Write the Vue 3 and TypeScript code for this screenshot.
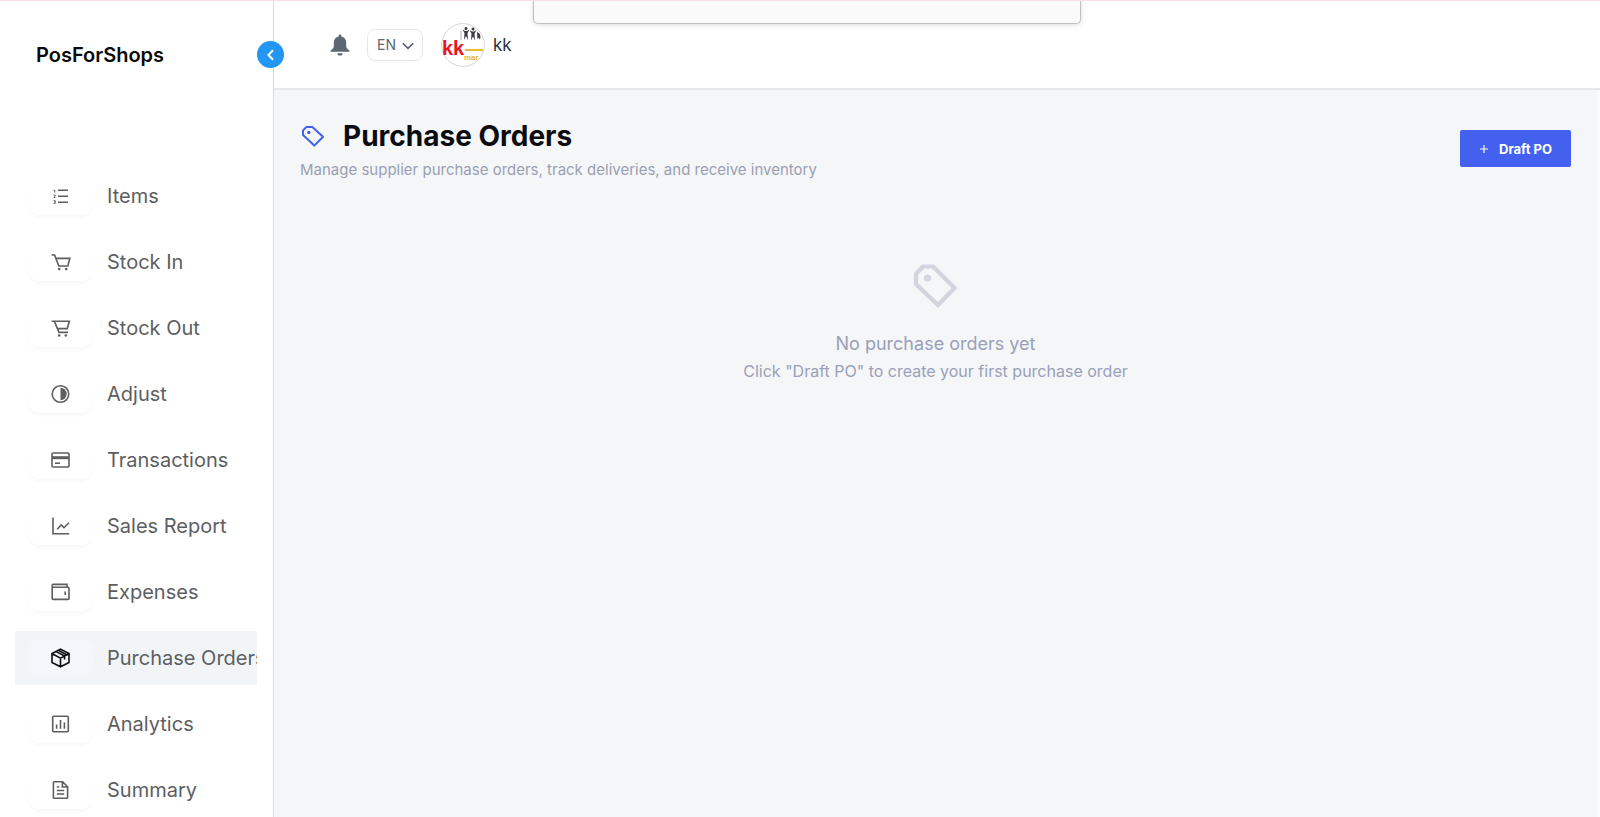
<script setup lang="ts">
import { ref } from 'vue'

interface NavItem {
  id: string
  label: string
}

const items: NavItem[] = [
  { id: 'items', label: 'Items' },
  { id: 'stock-in', label: 'Stock In' },
  { id: 'stock-out', label: 'Stock Out' },
  { id: 'adjust', label: 'Adjust' },
  { id: 'transactions', label: 'Transactions' },
  { id: 'sales', label: 'Sales Report' },
  { id: 'expenses', label: 'Expenses' },
  { id: 'orders', label: 'Purchase Orders' },
  { id: 'analytics', label: 'Analytics' },
  { id: 'summary', label: 'Summary' },
]

const active = ref('orders')
const language = ref('EN')
</script>

<template>
  <div class="app">
    <aside class="sidebar">
      <div class="brand">PosForShops</div>
      <button class="collapse" type="button" aria-label="Collapse sidebar">
        <svg viewBox="0 0 12 12" width="12" height="12"><path d="M8 1.2 3.4 6 8 10.8" fill="none" stroke="#fff" stroke-width="2" /></svg>
      </button>
      <nav class="nav">
        <a
          v-for="item in items"
          :key="item.id"
          href="#"
          class="nav-item"
          :class="{ active: item.id === active }"
          @click.prevent="active = item.id"
        >
          <span class="tile">
            <svg class="icon" viewBox="0 0 21 20" width="21" height="20" aria-hidden="true">
              <template v-if="item.id === 'items'">
                <path d="M8 4.3h10M8 10.3h10M8 16.3h10" />
                <path class="thin" d="M3.6 4.2h1.2v2.4M3.6 9h1.6v1.2l-1.4 1.3h1.6M3.6 14.6h1.6v2.8H3.6M4.2 16h1" />
              </template>
              <template v-else-if="item.id === 'stock-in'">
                <path d="M1.6 3h3l4.2 11h9.1l1.9-7.6H6" />
                <circle class="solid" cx="9.2" cy="17.1" r="1.3" />
                <circle class="solid" cx="16.2" cy="17.1" r="1.3" />
              </template>
              <template v-else-if="item.id === 'stock-out'">
                <path d="M1.6 3.2H19.3l-2.1 7.4H7.2M4.4 3.4 9 14.4h9" />
                <circle class="solid" cx="9.2" cy="17.5" r="1.3" />
                <circle class="solid" cx="15.8" cy="17.5" r="1.3" />
              </template>
              <template v-else-if="item.id === 'adjust'">
                <circle cx="10.5" cy="10" r="8.3" />
                <path class="solid" d="M10.5 3.8a6.2 6.2 0 0 1 0 12.4z" />
              </template>
              <template v-else-if="item.id === 'transactions'">
                <rect x="2" y="3" width="17" height="14" rx="1" />
                <path class="thick" d="M2 7.7h17" />
                <path d="M5 13.2h5" />
              </template>
              <template v-else-if="item.id === 'sales'">
                <path d="M3 1.5v16.3h16.2M7.2 13.3l4-4.3 2.8 2.7 5-5" />
              </template>
              <template v-else-if="item.id === 'expenses'">
                <path d="M17 5.2V2.4H3.2a1 1 0 0 0-1 1v13a1 1 0 0 0 1 1H18a1 1 0 0 0 1-1V6.2a1 1 0 0 0-1-1H2.4" />
                <path d="M15.2 9.6v3.4" />
              </template>
              <template v-else-if="item.id === 'orders'">
                <path d="M10.5 1.2 19 5.6v8.8l-8.5 4.4L2 14.4V5.6zM2.2 5.7l8.3 4.4 8.3-4.4M10.5 10.1v8.5M6.2 3.6l8.4 4.4v3.6M8.4 2.4l8.2 4.3" />
              </template>
              <template v-else-if="item.id === 'analytics'">
                <rect x="2.7" y="2.2" width="15.6" height="15.6" rx="1" />
                <path d="M6.6 10.4v4.4M10.5 6v8.8M14.4 8.4v6.4" />
              </template>
              <template v-else>
                <path d="M12.6 1.8H4.2a.8.8 0 0 0-.8.8v14.8c0 .4.4.8.8.8h12.6c.4 0 .8-.4.8-.8V6.8zM12.4 2v5h5M6.8 10.5h7.4M6.8 14h7.4M6.8 7h2.4" />
              </template>
            </svg>
          </span>
          <span class="label">{{ item.label }}</span>
        </a>
      </nav>
    </aside>

    <div class="content">
      <header class="topbar">
        <button class="bell" type="button" aria-label="Notifications">
          <svg viewBox="0 0 20 22" width="20" height="22">
            <path d="M10 .4c.8 0 1.3.5 1.3 1.3v.7c3 .6 4.9 3 4.9 6v3.7c0 1.6 1 3 3.2 4.5v1.2H.6v-1.2C2.8 15.1 3.8 13.700 3.800 12.100V8.400c0-3 1.900-5.400 4.900-6v-.7C8.700.9 9.200.4 10 .4zM7.300 19.200h5.400a2.700 2.300 0 0 1-5.400 0z" fill="#5d6675" />
          </svg>
        </button>
        <div class="lang">
          <select v-model="language" aria-label="Language">
            <option>EN</option>
          </select>
          <svg class="caret" viewBox="0 0 12 8" width="12" height="8" aria-hidden="true"><path d="M.8 1.2 6 6.4l5.200-5.200" fill="none" stroke="#555b66" stroke-width="1.6" /></svg>
        </div>
        <button class="user" type="button">
          <svg class="avatar" viewBox="0 0 44 44" width="44" height="44" aria-hidden="true">
            <circle cx="22" cy="22" r="21.4" fill="#fff" stroke="#d5d5d8" />
            <text class="mark" x="1" y="32">kk</text>
            <text class="mart" x="23" y="37">mar</text>
            <path d="M24 27h18" stroke="#e9b93a" stroke-width="2" />
            <path d="M20 8v9" stroke="#b5b5b8" />
            <g fill="#3c3c40">
              <circle cx="25" cy="5.500" r="1.500" />
              <circle cx="32" cy="6" r="1.500" />
              <path d="M21.500 6.500 24 8h2l2.500-1.500-2 3.500.5 7-2-4-2 4 .5-7zM28.500 7 31 8.500h2L35.500 7l-2 3.500.5 7-2-4-2 4 .5-7zM36 9l2.500 1.500 1 3-.5 3-1.500-2-1 2z" />
            </g>
          </svg>
          <span>kk</span>
        </button>
      </header>

      <main class="page">
        <div class="page-head">
          <div>
            <h1>
              <svg viewBox="0 0 24 24" width="24" height="24" aria-hidden="true">
                <path d="M3 6.400 6.400 3h6L23 12.700 14.300 21.600 3 11z" fill="none" stroke="#4361ee" stroke-width="2" stroke-linejoin="round" />
                <circle cx="8.800" cy="8.500" r="1.700" fill="#4361ee" />
              </svg>
              <span>Purchase Orders</span>
            </h1>
            <p class="sub">Manage supplier purchase orders, track deliveries, and receive inventory</p>
          </div>
          <button class="draft" type="button">
            <svg viewBox="0 0 10 10" width="10" height="10" aria-hidden="true"><path d="M5 1v8M1 5h8" stroke="#fff" stroke-width="1.2" /></svg>
            <span>Draft PO</span>
          </button>
        </div>

        <section class="empty">
          <svg viewBox="0 0 48 48" width="48" height="48" aria-hidden="true">
            <path d="M4 12 11 4.500H21L42.500 26 26 43 4 22z" fill="none" stroke="#d1d5de" stroke-width="4.200" />
            <circle cx="15.500" cy="16" r="3.600" fill="#d1d5de" />
          </svg>
          <p class="empty-title">No purchase orders yet</p>
          <p class="empty-text">Click "Draft PO" to create your first purchase order</p>
        </section>
      </main>
    </div>

    <div class="panel" aria-hidden="true"></div>
  </div>
</template>

<style>
body {
  margin: 0;
}
</style>

<style scoped>
.app {
  position: relative;
  display: flex;
  height: 100vh;
  overflow: hidden;
  box-sizing: border-box;
  border-top: 1px solid #f8dfe4;
  background: #fff;
  font-family: Inter, "Open Sans", sans-serif;
}
button {
  border: 0;
  padding: 0;
  background: none;
  font-family: inherit;
  cursor: pointer;
}
svg {
  display: block;
  flex: none;
}
.sidebar {
  position: relative;
  flex: none;
  width: 273px;
  border-right: 1px solid #d8d9dd;
}
.brand {
  padding: 40px 36px 0;
  height: 128px;
  font-size: 20px;
  line-height: 28px;
  font-weight: 600;
  color: #0b0b0d;
}
.collapse {
  position: absolute;
  top: 40px;
  right: -11px;
  width: 27px;
  height: 27px;
  border-radius: 50%;
  background: #2196f3;
  display: grid;
  place-items: center;
}
.nav {
  display: flex;
  flex-direction: column;
  gap: 12px;
  padding: 0 16px 0 15px;
}
.nav-item {
  display: flex;
  align-items: center;
  gap: 14px;
  height: 54px;
  padding-left: 13px;
  overflow: hidden;
  color: #5d5e61;
  text-decoration: none;
}
.nav-item.active {
  background: #f1f5f8;
}
.tile {
  flex: none;
  display: grid;
  place-items: center;
  width: 65px;
  height: 38px;
  border-radius: 12px;
  box-shadow: 0 3px 4px -1px rgba(0, 0, 0, 0.04);
}
.active .tile {
  box-shadow: none;
  background: #f3f7fb;
  color: #0c0d10;
}
.icon {
  fill: none;
  stroke: currentColor;
  stroke-width: 1.6;
}
.icon .thin {
  stroke-width: 1;
}
.icon .thick {
  stroke-width: 3;
}
.icon .solid {
  fill: currentColor;
  stroke: none;
}
.label {
  font-size: 20px;
  line-height: 28px;
  white-space: nowrap;
}
.content {
  flex: 1;
  min-width: 0;
  display: flex;
  flex-direction: column;
}
.topbar {
  display: flex;
  align-items: center;
  height: 87px;
  padding-left: 56px;
  border-bottom: 2px solid #e5e7ea;
}
.bell {
  margin-right: 17px;
}
.lang {
  position: relative;
  margin-right: 18px;
}
.lang select {
  appearance: none;
  width: 56px;
  height: 32px;
  padding: 0 0 0 9px;
  border: 1px solid #e6e7ea;
  border-radius: 8px;
  background: #fff;
  font-family: inherit;
  font-size: 14px;
  color: #62666e;
}
.caret {
  position: absolute;
  top: 13px;
  right: 9px;
  pointer-events: none;
}
.user {
  display: flex;
  align-items: center;
  gap: 8px;
  font-size: 17px;
  color: #2a3042;
}
.mark {
  font: bold 20px "Liberation Sans", sans-serif;
  fill: #e8151f;
}
.mart {
  font: bold 8px "Liberation Sans", sans-serif;
  fill: #e9b72c;
}
.page {
  flex: 1;
  padding: 28px 26px;
  border-right: 3px solid #f9fafb;
  background: #f4f6f8;
}
.page-head {
  display: flex;
  justify-content: space-between;
  align-items: flex-start;
}
h1 {
  display: flex;
  align-items: center;
  gap: 19px;
  margin: 0;
  font-size: 28px;
  line-height: 36px;
  font-weight: 700;
  color: #0b0c10;
}
.sub {
  margin: 5px 0 0;
  font-size: 15px;
  line-height: 22px;
  color: #9aa0b3;
}
.draft {
  display: flex;
  align-items: center;
  justify-content: center;
  gap: 10px;
  width: 111px;
  height: 37px;
  margin-top: 12px;
  border-radius: 2px;
  background: #4361ee;
  color: #fff;
  font-size: 13px;
  font-weight: 700;
}
.empty {
  display: flex;
  flex-direction: column;
  align-items: center;
  padding-top: 81px;
  color: #9aa0b8;
}
.empty p {
  margin: 0;
}
.empty-title {
  padding-top: 20px;
  font-size: 18px;
  line-height: 28px;
}
.empty-text {
  font-size: 16px;
  line-height: 26px;
}
/* Sheet hanging over the top edge of the window */
.panel {
  position: absolute;
  top: -1px;
  left: 50%;
  width: 548px;
  height: 24px;
  margin-left: -267px;
  box-sizing: border-box;
  border: 1px solid #c0c0c2;
  border-top: 0;
  border-radius: 0 0 5px 5px;
  background: #fafafa;
  box-shadow: 0 1px 5px rgba(0, 0, 0, 0.14);
}
</style>
